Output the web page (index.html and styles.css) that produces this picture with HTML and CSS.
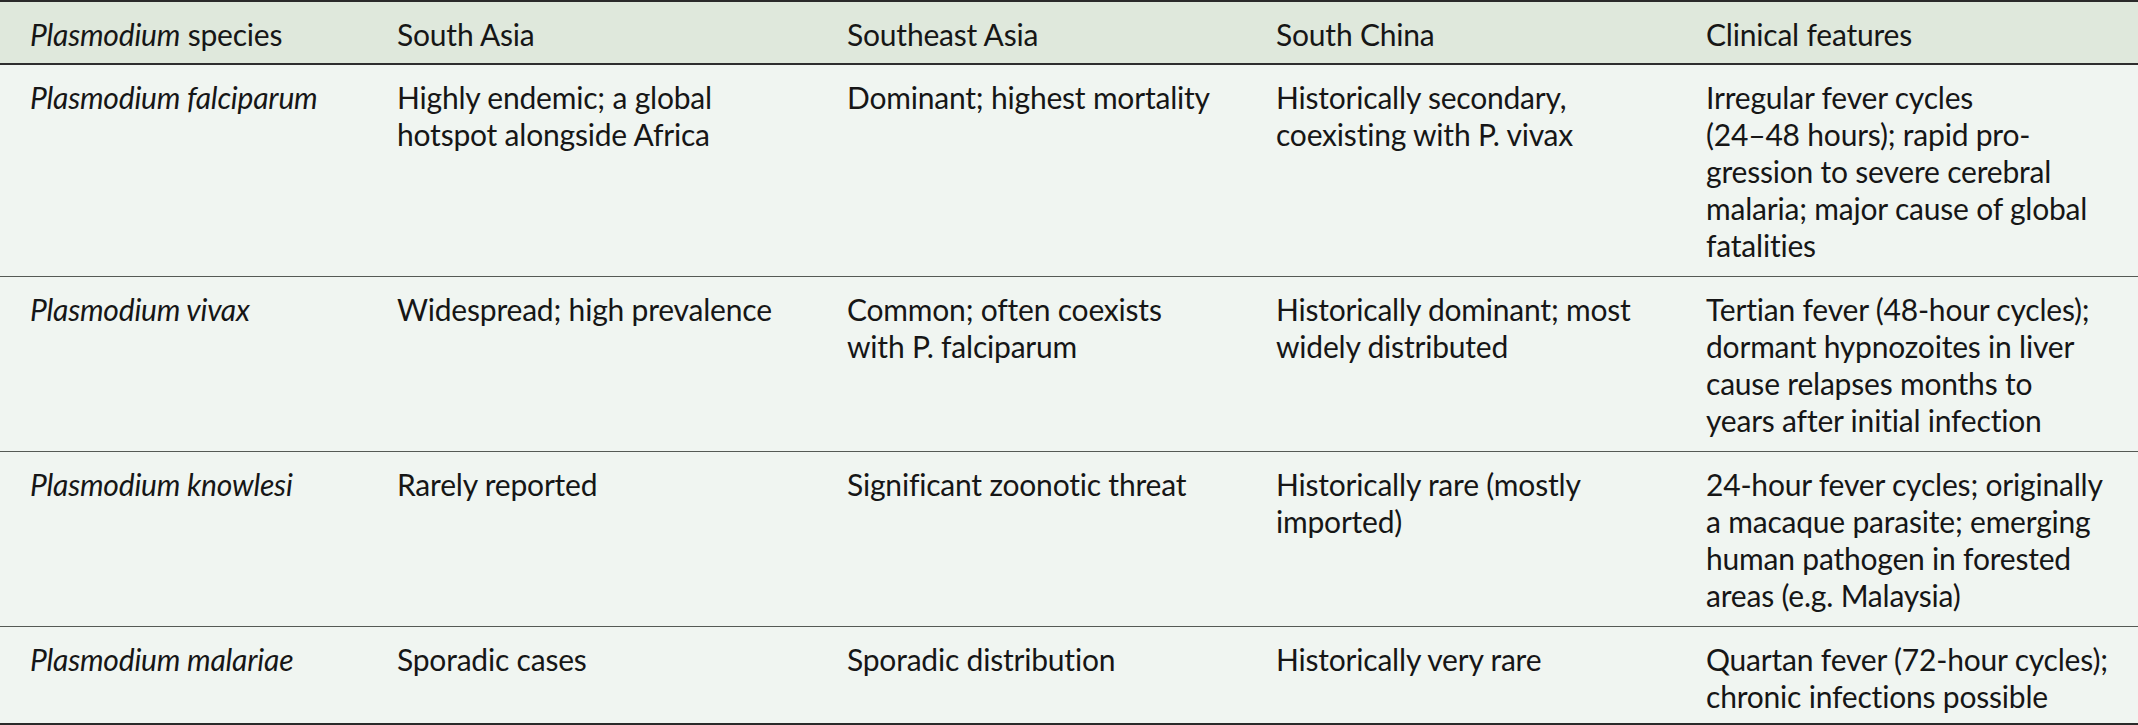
FILE: index.html
```html
<!DOCTYPE html>
<html lang="en">
<head>
<meta charset="utf-8">
<title>Plasmodium species distribution</title>
<link rel="stylesheet" href="styles.css">
</head>
<body>
<table class="species-table">
  <colgroup>
    <col class="c1"><col class="c2"><col class="c3"><col class="c4"><col class="c5">
  </colgroup>
  <thead>
    <tr>
      <th><em>Plasmodium</em> species</th>
      <th>South Asia</th>
      <th>Southeast Asia</th>
      <th>South China</th>
      <th>Clinical features</th>
    </tr>
  </thead>
  <tbody>
    <tr>
      <td class="sp">Plasmodium falciparum</td>
      <td>Highly endemic; a global<br>hotspot alongside Africa</td>
      <td>Dominant; highest mortality</td>
      <td>Historically secondary,<br>coexisting with P. vivax</td>
      <td>Irregular fever cycles<br>(24–48 hours); rapid pro-<br>gression to severe cerebral<br>malaria; major cause of global<br>fatalities</td>
    </tr>
    <tr>
      <td class="sp">Plasmodium vivax</td>
      <td>Widespread; high prevalence</td>
      <td>Common; often coexists<br>with P. falciparum</td>
      <td>Historically dominant; most<br>widely distributed</td>
      <td>Tertian fever (48-hour cycles);<br>dormant hypnozoites in liver<br>cause relapses months to<br>years after initial infection</td>
    </tr>
    <tr>
      <td class="sp">Plasmodium knowlesi</td>
      <td>Rarely reported</td>
      <td>Significant zoonotic threat</td>
      <td>Historically rare (mostly<br>imported)</td>
      <td>24-hour fever cycles; originally<br>a macaque parasite; emerging<br>human pathogen in forested<br>areas (e.g. Malaysia)</td>
    </tr>
    <tr class="last">
      <td class="sp">Plasmodium malariae</td>
      <td>Sporadic cases</td>
      <td>Sporadic distribution</td>
      <td>Historically very rare</td>
      <td>Quartan fever (72-hour cycles);<br>chronic infections possible</td>
    </tr>
  </tbody>
</table>
</body>
</html>
```
FILE: styles.css
```css
html, body {
  margin: 0;
  padding: 0;
  background: #ffffff;
}

.species-table {
  width: 100%;
  border-collapse: collapse;
  table-layout: fixed;
  font-family: "Lato", "Liberation Sans", sans-serif;
  font-size: 30px;
  line-height: 37px;
  letter-spacing: -0.2px;
  color: #161616;
  background: #f0f5f1;
  border-top: 2px solid #2a2a2a;
  border-bottom: 2px solid #2a2a2a;
}

.c1 { width: 367px; }
.c2 { width: 450px; }
.c3 { width: 429px; }
.c4 { width: 430px; }
.c5 { width: auto; }

.species-table th,
.species-table td {
  text-align: left;
  vertical-align: top;
  white-space: nowrap;
  padding: 14px 20px 12px 30px;
}

.species-table thead th {
  background: #dfe8dc;
  font-weight: 400;
  padding-top: 14px;
  padding-bottom: 10px;
  border-bottom: 2px solid #2e2e2e;
}

.species-table tbody tr + tr td {
  border-top: 1px solid #555a55;
}

.species-table tbody tr.last td {
  padding-bottom: 8px;
}

.species-table em,
.species-table .sp {
  font-style: italic;
}
```
